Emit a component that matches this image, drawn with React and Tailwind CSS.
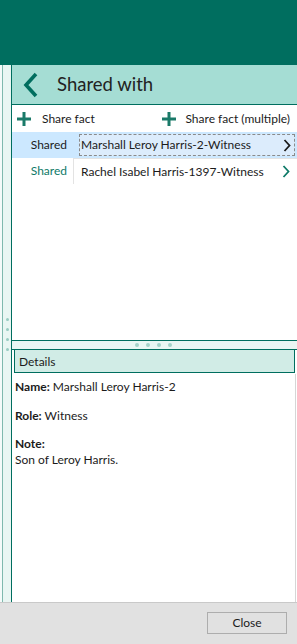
function Plus() {
  return (
    <svg width="14" height="14" viewBox="0 0 14 14" className="shrink-0">
      <rect x="5.5" y="0" width="3" height="14" fill="#1a7a69" />
      <rect x="0" y="5.5" width="14" height="3" fill="#1a7a69" />
    </svg>
  );
}

function Chevron({ color }) {
  return (
    <svg width="8" height="13" viewBox="0 0 8 13" className="shrink-0">
      <path d="M1.5 1 L6.5 6.5 L1.5 12" fill="none" stroke={color} strokeWidth="1.8" />
    </svg>
  );
}

export default function App() {
  return (
    <div className="w-[297px] h-[644px] flex flex-col bg-white overflow-hidden font-['Lato',sans-serif] text-[12px] text-[#1b1b1b]">
      {/* top bar */}
      <div className="h-[65px] shrink-0 bg-[#006e5f]" />

      <div className="flex-1 flex min-h-0">
        {/* collapsed left panel */}
        <div className="w-[12px] shrink-0 flex">
          <div className="w-[2px] bg-[#f4fbfa]" />
          <div className="w-px bg-[#7fb9ae]" />
          <div className="flex-1 bg-[#e9f6f3] flex flex-col items-center justify-center gap-[7px] pt-[1px]">
            <div className="w-[3px] h-[3px] rounded-full bg-[#98ccc2]" />
            <div className="w-[3px] h-[3px] rounded-full bg-[#98ccc2]" />
            <div className="w-[3px] h-[3px] rounded-full bg-[#98ccc2]" />
            <div className="w-[3px] h-[3px] rounded-full bg-[#98ccc2]" />
          </div>
          <div className="w-px bg-[#006e5f]" />
        </div>

        {/* main panel */}
        <div className="flex-1 flex flex-col min-w-0">
          <div className="h-[40px] shrink-0 bg-[#a5ddd4] border-b border-[#006e5f] flex items-center">
            <svg width="16" height="26" viewBox="0 0 16 26" className="ml-[11px]">
              <path d="M13 2 L3 13 L13 24" fill="none" stroke="#006e5f" strokeWidth="3.6" />
            </svg>
            <span className="ml-[18px] text-[18.5px] text-[#222] leading-none pb-[1px]">Shared with</span>
          </div>

          {/* upper panel */}
          <div className="h-[235px] shrink-0 flex flex-col">
            <div className="h-[27px] flex items-center">
              <div className="flex items-center ml-[5px]">
                <Plus />
                <span className="ml-[11px]">Share fact</span>
              </div>
              <div className="flex items-center ml-auto mr-[7px]">
                <Plus />
                <span className="ml-[9px]">Share fact (multiple)</span>
              </div>
            </div>

            <div className="h-[26px] flex bg-[#cce8ff]">
              <div className="w-[61px] flex items-center justify-end pr-[6px]">Shared</div>
              <div className="flex-1 flex items-center pl-[6px] pr-[2px]">
                <div className="flex-1 h-[22px] bg-[#dcecfc] border border-dashed border-[#8a8a8a] flex items-center pl-[1px] pr-[3px]">
                  <span className="flex-1">Marshall Leroy Harris-2-Witness</span>
                  <Chevron color="#1b1b1b" />
                </div>
              </div>
            </div>

            <div className="h-[26px] flex">
              <div className="w-[61px] flex items-center justify-end pr-[6px] text-[#0e7a68]">Shared</div>
              <div className="flex-1 flex items-center pl-[7px] pr-[7px] border-l border-t border-[#e3e3e3]">
                <span className="flex-1">Rachel Isabel Harris-1397-Witness</span>
                <Chevron color="#0e7a68" />
              </div>
            </div>
          </div>

          {/* splitter */}
          <div className="h-[9px] shrink-0 border-t border-[#006e5f] bg-[#e9f6f3] flex items-center justify-center gap-[7px] pr-[2px]">
            <div className="w-[4px] h-[4px] rounded-full bg-[#a3d2c9]" />
            <div className="w-[4px] h-[4px] rounded-full bg-[#a3d2c9]" />
            <div className="w-[4px] h-[4px] rounded-full bg-[#a3d2c9]" />
            <div className="w-[4px] h-[4px] rounded-full bg-[#a3d2c9]" />
          </div>

          {/* lower panel */}
          <div className="flex-1 flex flex-col pl-[2px] pr-[2px] border-t border-[#006e5f] relative">
            <div className="absolute right-[1px] top-[24px] bottom-0 w-px bg-[#d6d6d6]" />
            <div className="h-[24px] -mt-px shrink-0 bg-[#d1ece6] border border-[#006e5f] flex items-center pl-[4px] pt-[2px]">
              Details
            </div>
            <div className="pl-[1px] pt-[6px] leading-[16px]">
              <div>
                <b className="font-bold">Name:</b> Marshall Leroy Harris-2
              </div>
              <div className="mt-[13px]">
                <b className="font-bold">Role:</b> Witness
              </div>
              <div className="mt-[12px] font-bold">Note:</div>
              <div>Son of Leroy Harris.</div>
            </div>
          </div>
        </div>
      </div>

      {/* footer */}
      <div className="h-[42px] shrink-0 bg-[#e1e1e1] border-t border-[#c9c9c9] flex items-start justify-end pr-[10px] pt-[9px]">
        <button className="w-[80px] h-[22px] border border-[#adadad] bg-[#e1e1e1] flex items-center justify-center">
          Close
        </button>
      </div>
    </div>
  );
}
